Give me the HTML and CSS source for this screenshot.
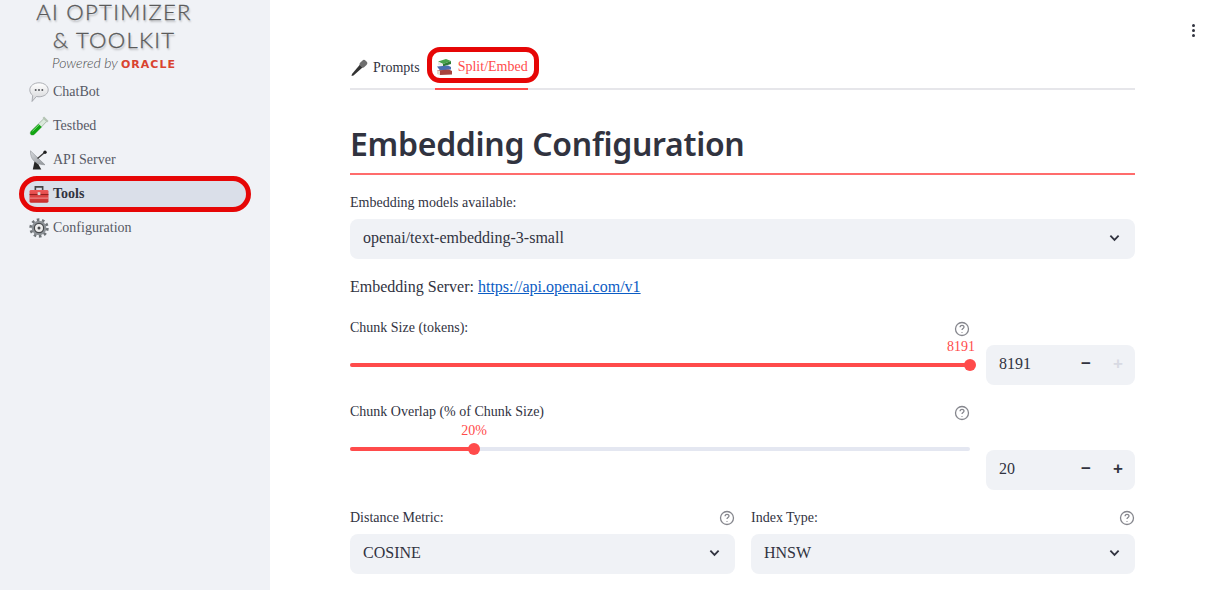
FILE: index.html
```html
<!DOCTYPE html>
<html lang="en">
<head>
  <meta charset="UTF-8">
  <title>AI Optimizer &amp; Toolkit</title>
  <link rel="stylesheet" href="styles.css">
</head>
<body>
  <aside class="sidebar">
    <div class="logo">
      <div class="logo-line">AI OPTIMIZER</div>
      <div class="logo-line">&amp; TOOLKIT</div>
      <div class="logo-sub">Powered by <span class="oracle">ORACLE</span></div>
    </div>
    <nav class="nav">
      <a class="nav-item">
        <svg class="nav-icon" viewBox="0 0 20 20">
          <defs><linearGradient id="bubble" x1="0" y1="0" x2="0" y2="1"><stop offset="0" stop-color="#ffffff"/><stop offset="1" stop-color="#d2d3d6"/></linearGradient></defs>
          <path d="M10 .8c5 0 9.200 3 9.200 7s-4.200 7-9.200 7c-.9 0-1.800-.1-2.600-.3L3 19.500l.7-6C1.900 12.100.8 10 .8 7.800c0-4 4.200-7 9.200-7z" fill="url(#bubble)" stroke="#9b9da3" stroke-width=".8"/>
          <circle cx="6.700" cy="8" r="1" fill="#55575c"/><circle cx="10" cy="8" r="1" fill="#55575c"/><circle cx="13.300" cy="8" r="1" fill="#55575c"/>
        </svg>
        ChatBot
      </a>
      <a class="nav-item">
        <svg class="nav-icon" viewBox="0 0 20 20">
          <path d="M15.200 2.300l2.800 2.800L5.500 18.200c-1.100 1.100-2.900 1.100-3.700.3s-.7-2.500.4-3.600z" fill="#dbe9dc" stroke="#7f9a80" stroke-width=".6"/>
          <path d="M9.500 8l3.300 2.900-7.300 7.300c-1.100 1.100-2.900 1.100-3.700.3s-.7-2.500.4-3.600z" fill="#12a512"/>
          <path d="M3.500 15.200l6.500-6.400" stroke="#7fe07f" stroke-width="1"/>
          <path d="M14.300 1.300l4.500 4.500" stroke="#b4c4b4" stroke-width="2.200"/>
        </svg>
        Testbed
      </a>
      <a class="nav-item">
        <svg class="nav-icon" viewBox="0 0 20 20">
          <defs><linearGradient id="dish" x1="0" y1="0" x2="1" y2="1"><stop offset="0" stop-color="#d8dbdf"/><stop offset="1" stop-color="#8f9398"/></linearGradient></defs>
          <path d="M1.500 .8c-.5 8 4.500 14 14.500 14z" fill="url(#dish)" stroke="#7f8287" stroke-width=".5"/>
          <path d="M8.500 8.500l6.500-5.500" stroke="#3c3c3c" stroke-width="1.400"/>
          <circle cx="16" cy="2.300" r="1.700" fill="#1f1f1f"/>
          <path d="M5.500 11.500L3.800 19.500h8.500L9.500 14.500z" fill="#262626"/>
        </svg>
        API Server
      </a>
      <a class="nav-item active">
        <svg class="nav-icon" viewBox="0 0 22 20">
          <defs><linearGradient id="box" x1="0" y1="0" x2="0" y2="1"><stop offset="0" stop-color="#ee5a5a"/><stop offset="1" stop-color="#c92b2b"/></linearGradient></defs>
          <path d="M7 6V2.200h8V6" fill="none" stroke="#454545" stroke-width="1.800"/>
          <rect x=".6" y="5.500" width="20.800" height="14" rx="1.500" fill="url(#box)"/>
          <rect x=".6" y="10.200" width="20.800" height="1" fill="#7e1717"/>
          <rect x=".6" y="14" width="20.800" height="1" fill="#f6a0a0"/>
          <rect x="9.500" y="8" width="3" height="3.200" fill="#d9d9d9"/>
        </svg>
        Tools
      </a>
      <a class="nav-item">
        <svg class="nav-icon" viewBox="0 0 20 20">
          <circle cx="10" cy="10" r="7.300" fill="#8c9196"/>
          <circle cx="10" cy="10" r="8.400" fill="none" stroke="#6f7478" stroke-width="2.600" stroke-dasharray="2.600 2.700"/>
          <circle cx="10" cy="10" r="4.600" fill="#ececec" stroke="#46484b" stroke-width="1.200"/>
          <circle cx="10" cy="10" r="1.500" fill="#46484b"/>
        </svg>
        Configuration
      </a>
    </nav>
    <div class="callout callout-nav"></div>
  </aside>

  <main class="main">
    <div class="menu-dots"><span></span><span></span><span></span></div>

    <div class="tabs">
      <div class="tab">
        <svg class="tab-icon" viewBox="0 0 18 18">
          <path d="M10 5.500l2.800 2.800L3.500 16.500l-2 .5.500-2z" fill="#333"/>
          <rect x="9.700" y="1.800" width="7.500" height="6" rx="2.400" transform="rotate(-45 13.400 4.800)" fill="#6f6f6f"/>
        </svg>
        Prompts
      </div>
      <div class="tab tab-active">
        <svg class="tab-icon" viewBox="0 0 18 18">
          <path d="M3 3.500L11 1l5 2-8 3z" fill="#46a34c"/>
          <path d="M3 3.500V7l5 1.500V6z" fill="#e9e9e9"/>
          <path d="M8 6l8-3v3l-8 2.500z" fill="#2f7d36"/>
          <path d="M2 8.500l11-1 3 1.500v2.500L5 12.500z" fill="#4a6fb0"/>
          <path d="M2 12.500l12-1 3 1.500v3.500L5 17z" fill="#a8433e"/>
          <path d="M2 12.500L5 13v4l-3-1z" fill="#e3d9c8"/>
        </svg>
        Split/Embed
      </div>
      <div class="callout callout-tab"></div>
    </div>

    <h1 class="page-title">Embedding Configuration</h1>

    <label class="field-label">Embedding models available:</label>
    <div class="select">
      openai/text-embedding-3-small
      <svg class="chevron" viewBox="0 0 12 8"><path d="M1.500 1.500L6 6l4.500-4.500" /></svg>
    </div>

    <p class="server-line">Embedding Server: <a href="#">https://api.openai.com/v1</a></p>

    <div class="slider-row row-size">
      <div class="slider-col">
        <div class="label-row">
          <span>Chunk Size (tokens):</span>
          <svg class="help" viewBox="0 0 16 16"><circle cx="8" cy="8" r="6.500"/><path d="M6.100 6.200c0-2.500 3.900-2.500 3.900-.1 0 1.500-2 1.500-2 3"/><path d="M8 10.900v.8"/></svg>
        </div>
        <div class="slider">
          <div class="slider-value value-end">8191</div>
          <div class="track"><div class="fill" style="width: 100%"><span class="thumb"></span></div></div>
        </div>
      </div>
      <div class="stepper">
        <span class="stepper-value">8191</span>
        <span class="step">&minus;</span>
        <span class="step step-off">+</span>
      </div>
    </div>

    <div class="slider-row row-overlap">
      <div class="slider-col col-overlap">
        <div class="label-row">
          <span>Chunk Overlap (% of Chunk Size)</span>
          <svg class="help" viewBox="0 0 16 16"><circle cx="8" cy="8" r="6.500"/><path d="M6.100 6.200c0-2.500 3.900-2.500 3.900-.1 0 1.500-2 1.500-2 3"/><path d="M8 10.900v.8"/></svg>
        </div>
        <div class="slider">
          <div class="slider-value" style="left: 20%">20%</div>
          <div class="track"><div class="fill" style="width: 20%"><span class="thumb"></span></div></div>
        </div>
      </div>
      <div class="stepper">
        <span class="stepper-value">20</span>
        <span class="step">&minus;</span>
        <span class="step">+</span>
      </div>
    </div>

    <div class="two-col">
      <div>
        <div class="label-row label-tight">
          <span>Distance Metric:</span>
          <svg class="help" viewBox="0 0 16 16"><circle cx="8" cy="8" r="6.500"/><path d="M6.100 6.200c0-2.500 3.900-2.500 3.900-.1 0 1.500-2 1.500-2 3"/><path d="M8 10.900v.8"/></svg>
        </div>
        <div class="select">
          COSINE
          <svg class="chevron" viewBox="0 0 12 8"><path d="M1.500 1.500L6 6l4.500-4.500" /></svg>
        </div>
      </div>
      <div>
        <div class="label-row label-tight">
          <span>Index Type:</span>
          <svg class="help" viewBox="0 0 16 16"><circle cx="8" cy="8" r="6.500"/><path d="M6.100 6.200c0-2.500 3.900-2.500 3.900-.1 0 1.500-2 1.500-2 3"/><path d="M8 10.900v.8"/></svg>
        </div>
        <div class="select">
          HNSW
          <svg class="chevron" viewBox="0 0 12 8"><path d="M1.500 1.500L6 6l4.500-4.500" /></svg>
        </div>
      </div>
    </div>
  </main>
</body>
</html>
```

FILE: styles.css
```css
:root {
  --red: #ff4b4b;
  --callout: #e60606;
  --text: #31333f;
  --surface: #f0f2f6;
  --line: #e6e6ea;
}

html, body {
  height: 590px;
  overflow: hidden;
}

body {
  margin: 0;
  display: flex;
  font-family: "Liberation Serif", "Times New Roman", serif;
  font-size: 14px;
  color: var(--text);
  background: #fff;
}

/* sidebar */
.sidebar {
  position: relative;
  flex: 0 0 270px;
  height: 590px;
  background: var(--surface);
}

.logo {
  height: 77px;
  padding-right: 42px;
  text-align: center;
  color: #5a5a5a;
  font-family: Lato, "Liberation Sans", sans-serif;
}

.logo-line {
  font-size: 22px;
  font-weight: 300;
  line-height: 28px;
  letter-spacing: 1.3px;
  -webkit-text-stroke: 0.3px #5a5a5a;
  text-shadow: 1px 2px 2px rgba(0, 0, 0, 0.25);
}

.logo-line:first-child {
  margin-top: -2px;
}

.logo-sub {
  margin-top: 2px;
  font-size: 14px;
  font-weight: 300;
  line-height: 14px;
  font-style: italic;
  color: #4a4a4a;
  white-space: nowrap;
}

.oracle {
  font-family: "DejaVu Sans", sans-serif;
  font-style: normal;
  font-weight: 700;
  font-size: 11px;
  letter-spacing: 1px;
  color: #d9432f;
}

.nav {
  display: flex;
  flex-direction: column;
  gap: 4px;
  padding: 2px 24px 0;
}

.nav-item {
  display: flex;
  align-items: center;
  gap: 4px;
  height: 30px;
  padding-left: 5px;
  border-radius: 15px;
  color: #575965;
}

.nav-item.active {
  background: #dadfe9;
  color: var(--text);
  font-weight: 700;
}

.nav-icon {
  flex: none;
  width: 20px;
  height: 20px;
}

/* red marks drawn on top of the screenshot */
.callout {
  position: absolute;
  box-sizing: border-box;
  border: 5px solid var(--callout);
  pointer-events: none;
}

.callout-nav {
  left: 19px;
  top: 176px;
  width: 232px;
  height: 36px;
  border-radius: 18px;
}

.callout-tab {
  left: 77px;
  top: 1px;
  width: 112px;
  height: 36px;
  border-radius: 13px;
}

/* main column */
.main {
  position: relative;
  flex: 1;
  box-sizing: border-box;
  padding: 46px 87px 0 80px;
}

.menu-dots {
  position: absolute;
  top: 24px;
  right: 27px;
  display: flex;
  flex-direction: column;
  gap: 2px;
}

.menu-dots span {
  width: 3px;
  height: 3px;
  border-radius: 50%;
  background: #31333f;
}

.tabs {
  position: relative;
  display: flex;
  gap: 15px;
  height: 42px;
  border-bottom: 2px solid var(--line);
}

.tab {
  display: flex;
  align-items: center;
  gap: 5px;
  height: 44px;
  box-sizing: border-box;
}

.tab-active {
  color: var(--red);
  border-bottom: 2px solid var(--red);
}

.tab-icon {
  flex: none;
  width: 18px;
  height: 18px;
}

.page-title {
  margin: 33px 0 0;
  padding-bottom: 8px;
  border-bottom: 2px solid #ff6c6c;
  font-family: "Noto Sans", "Open Sans", sans-serif;
  font-size: 32px;
  line-height: 42px;
  font-weight: 600;
  letter-spacing: -0.3px;
}

.field-label {
  display: block;
  margin-top: 20px;
  height: 16px;
  line-height: 16px;
}

.select {
  display: flex;
  align-items: center;
  justify-content: space-between;
  box-sizing: border-box;
  height: 40px;
  margin-top: 8px;
  padding: 0 15px 2px 13px;
  border-radius: 8px;
  background: var(--surface);
  font-size: 16px;
}

.chevron {
  width: 11px;
  height: 8px;
  fill: none;
  stroke: var(--text);
  stroke-width: 2;
}

.server-line {
  margin: 18px 0 0;
  font-size: 16px;
  line-height: 20px;
}

.server-line a {
  color: #0b5cc4;
}

.slider-row {
  display: grid;
  grid-template-columns: 1fr 149px;
  gap: 16px;
  align-items: end;
}

.row-size {
  margin-top: 22px;
}

.row-overlap {
  margin-top: 18px;
}

.label-row {
  display: flex;
  justify-content: space-between;
  align-items: center;
  height: 18px;
}

.help {
  flex: none;
  width: 16px;
  height: 16px;
  margin-top: 2px;
  fill: none;
  stroke: #85868d;
  stroke-width: 1.300;
}

.slider {
  position: relative;
  height: 48px;
}

.slider-value {
  position: absolute;
  top: 2px;
  color: var(--red);
  line-height: 16px;
  transform: translateX(-50%);
}

.value-end {
  right: -5px;
  transform: none;
}

.track {
  position: absolute;
  left: 0;
  right: 0;
  top: 26px;
  height: 4px;
  border-radius: 2px;
  background: #e4e7f1;
}

.fill {
  position: relative;
  height: 4px;
  border-radius: 2px;
  background: var(--red);
}

.thumb {
  position: absolute;
  right: -6px;
  top: -4px;
  width: 12px;
  height: 12px;
  border-radius: 50%;
  background: var(--red);
}

.col-overlap {
  padding-bottom: 21px;
}

.stepper {
  display: flex;
  align-items: center;
  height: 40px;
  box-sizing: border-box;
  padding: 0 1px 2px 13px;
  border-radius: 8px;
  background: var(--surface);
  font-size: 16px;
}

.stepper-value {
  flex: 1;
}

.step {
  width: 32px;
  text-align: center;
  font-family: "Liberation Sans", sans-serif;
  font-weight: 700;
  font-size: 17px;
}

.step-off {
  color: #d8dae3;
}

.two-col {
  display: grid;
  grid-template-columns: 385px 1fr;
  gap: 16px;
  margin-top: 18px;
}

.label-tight span {
  margin-top: 2px;
}
```
